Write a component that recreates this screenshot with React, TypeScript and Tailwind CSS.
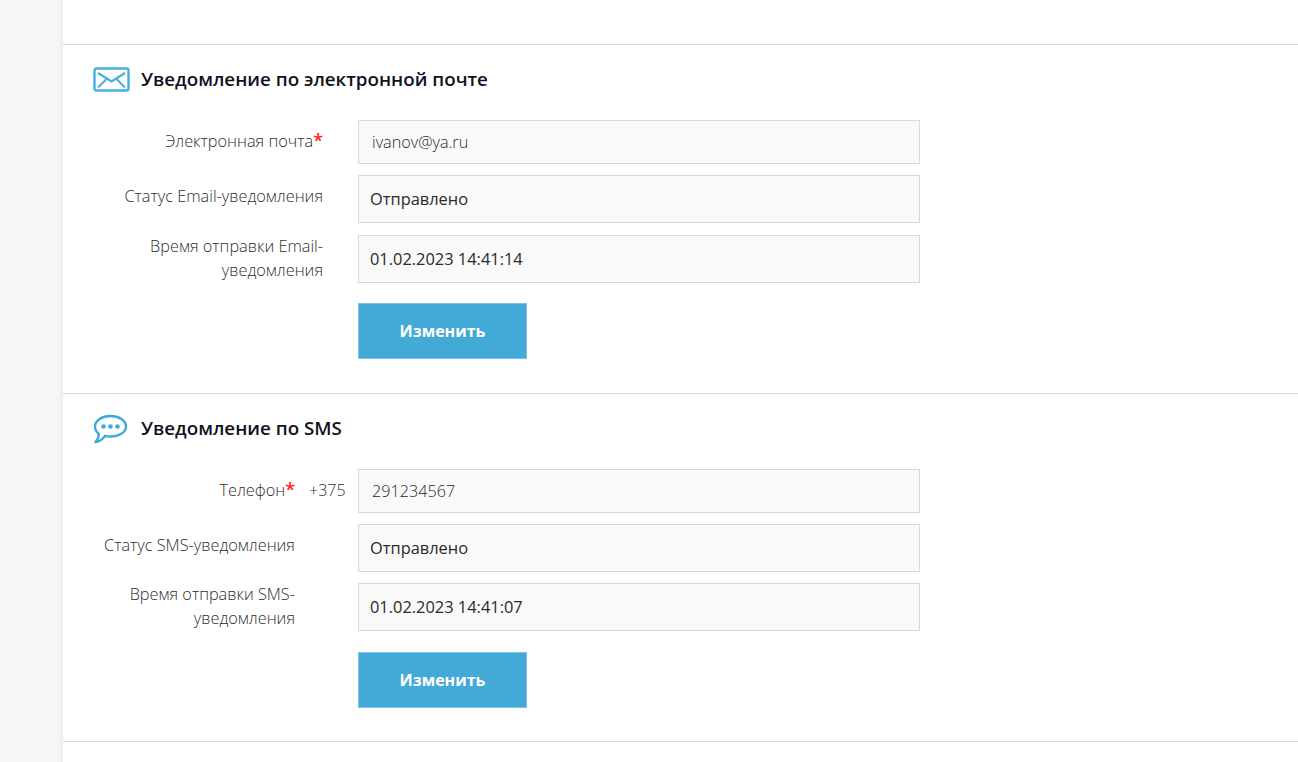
import React from 'react';

const font = { fontFamily: '"Open Sans", sans-serif' };

const Field = ({ value, muted }: { value: string; muted?: boolean }) => (
  <div
    className={`w-[562px] bg-[#f9f9f9] border border-[#d9d9d9] flex items-center ${
      muted
        ? 'h-[44px] pl-[13px] text-[16.200px] font-light text-[#2a2a2a]'
        : 'h-[48px] pl-[11px] text-[16.400px] text-[#2a2a2a]'
    }`}
  >
    {value}
  </div>
);

const Label = ({ children, width, up }: { children: React.ReactNode; width: string; up: string }) => (
  <div className={`${width} ${up} shrink-0 text-right text-[16.300px] font-light leading-[24px] text-[#2e2e2e]`}>
    {children}
  </div>
);

const Star = () => <span className="text-[#ff1a1a] font-semibold text-[18px] leading-[18px]">*</span>;

const SaveButton = ({ top }: { top: string }) => (
  <button className={`ml-[295px] ${top} w-[169px] h-[56px] bg-[#43a9d6] border border-[#7cc3e4] text-white text-[16px] font-bold block`}>
    Изменить
  </button>
);

const MailIcon = () => (
  <svg width="37" height="25" viewBox="0 0 37 25" fill="none" stroke="#45b0dc" strokeWidth="2.400">
    <rect x="1.500" y="1.500" width="34" height="22" rx="2" />
    <path d="M5 6 L18.500 14.500 L32 6" strokeWidth="2.200" />
    <path d="M5 20.500 L13.500 12 M32 20.500 L23.500 12" strokeWidth="2" />
  </svg>
);

const ChatIcon = () => (
  <svg width="35" height="30" viewBox="0 0 35 30" fill="none">
    <path
      d="M17.500 2 C26 2 33 6.500 33 12.500 C33 18.500 26 22.500 17.500 22.500 C15.500 22.500 13.700 22.300 12 21.800 C10 24.800 7 27.500 2.500 28 C4.500 25.800 5.800 23 5.800 19.800 C3.300 18 2 15.500 2 12.500 C2 6.500 9 2 17.500 2 Z"
      stroke="#3fa9d8"
      strokeWidth="2.400"
      strokeLinejoin="round"
    />
    <circle cx="10.500" cy="12.500" r="2.300" fill="#3fa9d8" />
    <circle cx="17.500" cy="12.500" r="2.300" fill="#3fa9d8" />
    <circle cx="24.500" cy="12.500" r="2.300" fill="#3fa9d8" />
  </svg>
);

const App = () => {
  return (
    <div className="h-[762px] overflow-hidden bg-[#f6f6f6] pl-[63px]" style={font}>
      <div className="h-full bg-white shadow-[-2px_0_4px_rgba(0,0,0,0.05)] pt-[44px]">
        {/* email */}
        <section className="border-t border-[#d9d9d9] h-[349px]">
          <div className="flex items-center h-[69px] pl-[30px] gap-[11px]">
            <MailIcon />
            <h2 className="text-[18.750px] font-semibold text-[#111122]">Уведомление по электронной почте</h2>
          </div>
          <div className="flex items-center mt-[6px]">
            <Label width="w-[260px]" up="pb-[2px]">
              Электронная почта
              <Star />
            </Label>
            <div className="ml-[35px]">
              <Field value="ivanov@ya.ru" muted />
            </div>
          </div>
          <div className="flex items-center mt-[11px]">
            <Label width="w-[260px]" up="pb-[6px]">Статус Email-уведомления</Label>
            <div className="ml-[35px]">
              <Field value="Отправлено" />
            </div>
          </div>
          <div className="flex items-center mt-[12px]">
            <Label width="w-[260px]" up="-mt-[2px]">
              Время отправки Email-
              <br />
              уведомления
            </Label>
            <div className="ml-[35px]">
              <Field value="01.02.2023 14:41:14" />
            </div>
          </div>
          <SaveButton top="mt-[20px]" />
        </section>

        {/* sms */}
        <section className="border-t border-[#d9d9d9] h-[348px]">
          <div className="flex items-center h-[69px] pl-[30px] gap-[13px]">
            <ChatIcon />
            <h2 className="text-[18.750px] font-semibold text-[#111122]">Уведомление по SMS</h2>
          </div>
          <div className="flex items-center mt-[6px]">
            <Label width="w-[232px]" up="pb-[2px]">
              Телефон
              <Star />
            </Label>
            <span className="ml-[14px] w-[49px] text-[16px] font-light text-[#2e2e2e] pb-[2px]">+375</span>
            <Field value="291234567" muted />
          </div>
          <div className="flex items-center mt-[11px]">
            <Label width="w-[232px]" up="pb-[6px]">Статус SMS-уведомления</Label>
            <div className="ml-[63px]">
              <Field value="Отправлено" />
            </div>
          </div>
          <div className="flex items-center mt-[11px]">
            <Label width="w-[232px]" up="-mt-[2px]">
              Время отправки SMS-
              <br />
              уведомления
            </Label>
            <div className="ml-[63px]">
              <Field value="01.02.2023 14:41:07" />
            </div>
          </div>
          <SaveButton top="mt-[21px]" />
        </section>
        <div className="border-t border-[#d9d9d9]" />
      </div>
    </div>
  );
};

export default App;
